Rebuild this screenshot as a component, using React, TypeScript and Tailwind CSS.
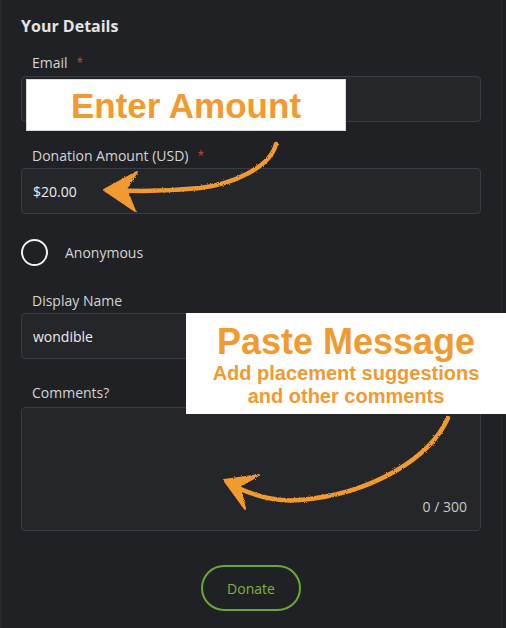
import React from "react";

// form field label with optional red asterisk
function Label({ text, required }: { text: string; required?: boolean }) {
  return (
    <div className="pl-[11px] h-[18px] flex items-center text-[14px] leading-[18px] text-[#d4d4d6]">
      <span>{text}</span>
      {required && <span className="ml-[9px] text-[#c4473b] text-[12px]">*</span>}
    </div>
  );
}

function Input({ value }: { value?: string }) {
  return (
    <div className="h-[46px] rounded-[4px] border border-[#3b3c41] bg-[#25262a] flex items-center px-[11px] text-[14px] text-[#ececee]">
      {value}
    </div>
  );
}

// hand drawn orange arrows
function Arrows() {
  return (
    <svg
      className="absolute inset-0 pointer-events-none"
      width="506"
      height="628"
      viewBox="0 0 506 628"
    >
      <defs>
        <filter id="rough">
          <feTurbulence type="fractalNoise" baseFrequency="0.9" numOctaves="2" seed="3" />
          <feDisplacementMap in="SourceGraphic" scale="2.5" />
        </filter>
      </defs>
      <g filter="url(#rough)" fill="#f29a30" stroke="#f29a30" strokeLinecap="round" strokeLinejoin="round">
        <path
          d="M276 144 C270 168 232 184 200 188 C170 191 145 192 112 190"
          fill="none"
          strokeWidth="4.5"
        />
        <path d="M104 190 L137 172 L126 189 L135 211 Z" strokeWidth="2" />
        <path
          d="M448 418 C430 458 372 494 300 500 C276 502 256 497 234 486"
          fill="none"
          strokeWidth="4.5"
        />
        <path d="M224 480 L259 475 L240 486 L245 509 Z" strokeWidth="2" />
      </g>
    </svg>
  );
}

export default function App() {
  return (
    <div className="relative w-[506px] h-[628px] overflow-hidden bg-[#1f2024] font-['Open_Sans',sans-serif]">
      <div className="w-[502px] h-full bg-[#202125] border-l-2 border-[#28292d] border-r border-r-[#2b2c30] pl-[19px] pr-[20px] pt-[15px] flex flex-col">
        <h2 className="h-[22px] leading-[22px] text-[16px] font-bold text-[#e4e4e6]">Your Details</h2>

        <div className="mt-[17px]">
          <Label text="Email" required />
        </div>
        <div className="mt-[4px]">
          <Input />
        </div>

        <div className="mt-[25px]">
          <Label text="Donation Amount (USD)" required />
        </div>
        <div className="mt-[3px]">
          <Input value="$20.00" />
        </div>

        <div className="mt-[25px] flex items-center">
          <div className="w-[27px] h-[27px] rounded-full border-[2.5px] border-[#f2f2f2]" />
          <span className="ml-[17px] text-[14px] text-[#d4d4d6]">Anonymous</span>
        </div>

        <div className="mt-[26px]">
          <Label text="Display Name" />
        </div>
        <div className="mt-[3px]">
          <Input value="wondible" />
        </div>

        <div className="mt-[25px]">
          <Label text="Comments?" />
        </div>
        <div className="mt-[5px] h-[124px] rounded-[4px] border border-[#3b3c41] bg-[#25262a] flex items-end justify-end pr-[13px] pb-[13px]">
          <span className="text-[14px] text-[#c8c8ca]">0 / 300</span>
        </div>

        <div className="mt-[34px] flex justify-center">
          <button className="w-[100px] h-[46px] rounded-full border-2 border-[#6aa834] text-[14px] font-medium text-[#7ab53c]">
            Donate
          </button>
        </div>
      </div>

      {/* annotation overlays */}
      <div className="absolute left-[26px] top-[79px] w-[320px] h-[52px] bg-white border border-[#d8d8d8] flex items-center justify-center">
        <span className="font-['Liberation_Sans',Arial,sans-serif] font-bold text-[35px] leading-none text-[#f29a30]">
          Enter Amount
        </span>
      </div>
      <div className="absolute left-[186px] top-[313px] w-[320px] h-[101px] bg-white flex flex-col items-center pt-[9px] font-['Liberation_Sans',Arial,sans-serif] font-bold text-[#f29a30]">
        <span className="text-[36px] leading-[40px]">Paste Message</span>
        <span className="text-[20px] leading-[23px]">Add placement suggestions</span>
        <span className="text-[20px] leading-[23px]">and other comments</span>
      </div>

      <Arrows />
    </div>
  );
}
